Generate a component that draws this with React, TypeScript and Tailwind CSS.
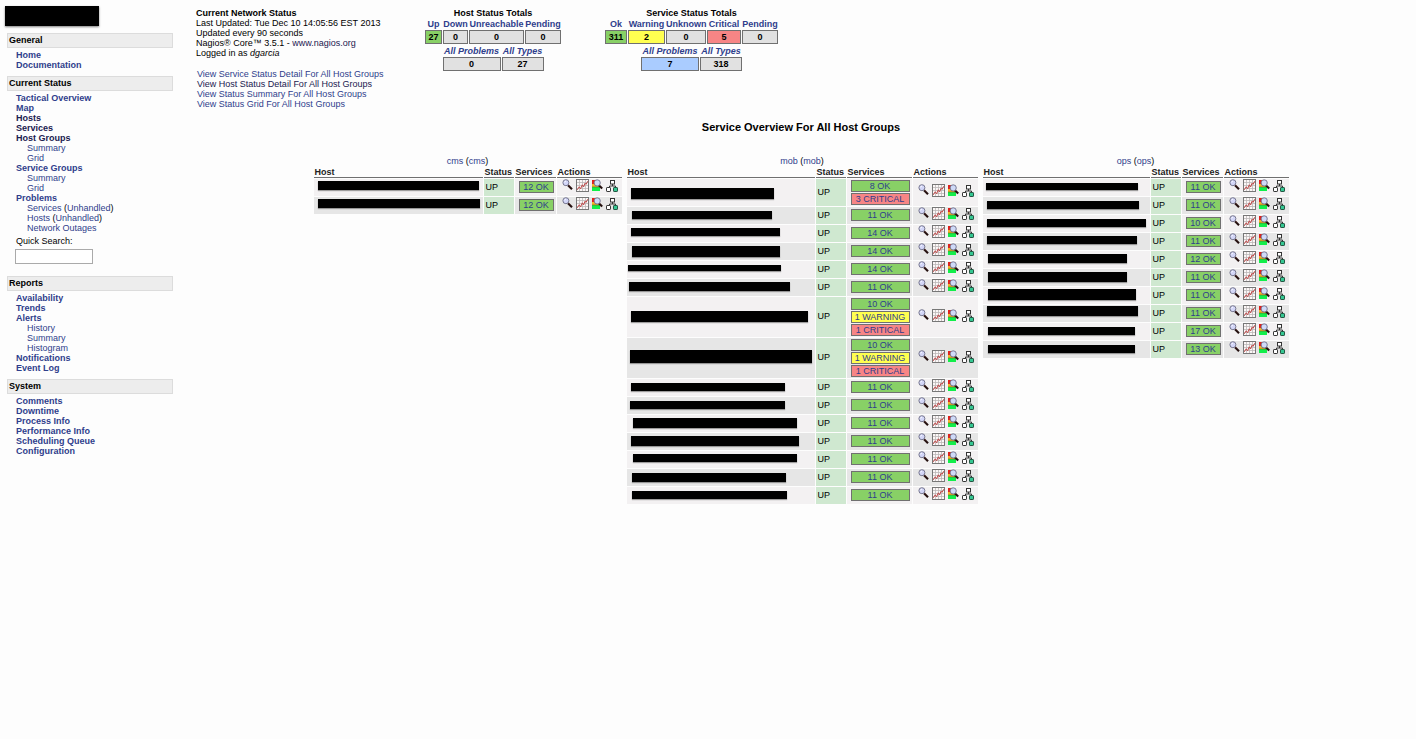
import React from "react";

type Tone = "ok" | "warning" | "critical";
type Bar = [left: number, top: number, width: number, height: number];
type HostRow = { bar: Bar; services: [string, Tone][] };
type Group = { name: string; cols: [number, number, number, number]; rows: HostRow[] };
type NavItem = { label: string; sub?: boolean; visited?: boolean; paren?: boolean };

const toneClass: Record<Tone, string> = {
  ok: "bg-[#88d066]",
  warning: "bg-[#ffff50]",
  critical: "bg-[#f78585]",
};

const ok = (n: number): [string, Tone] => [`${n} OK`, "ok"];
const warn = (n: number): [string, Tone] => [`${n} WARNING`, "warning"];
const crit = (n: number): [string, Tone] => [`${n} CRITICAL`, "critical"];

const groups: Group[] = [
  {
    name: "cms",
    cols: [169, 30, 41, 65],
    rows: [
      { bar: [4, 2, 161, 9], services: [ok(12)] },
      { bar: [4, 2, 162, 9], services: [ok(12)] },
    ],
  },
  {
    name: "mob",
    cols: [188, 30, 65, 65],
    rows: [
      { bar: [4, 9, 143, 11], services: [ok(8), crit(3)] },
      { bar: [5, 4, 140, 8], services: [ok(11)] },
      { bar: [4, 3, 149, 8], services: [ok(14)] },
      { bar: [5, 3, 148, 11], services: [ok(14)] },
      { bar: [1, 4, 153, 6], services: [ok(14)] },
      { bar: [2, 3, 161, 9], services: [ok(11)] },
      { bar: [4, 14, 177, 11], services: [ok(10), warn(1), crit(1)] },
      { bar: [3, 12, 182, 13], services: [ok(10), warn(1), crit(1)] },
      { bar: [4, 4, 154, 8], services: [ok(11)] },
      { bar: [3, 4, 155, 8], services: [ok(11)] },
      { bar: [6, 3, 164, 10], services: [ok(11)] },
      { bar: [4, 3, 168, 10], services: [ok(11)] },
      { bar: [6, 3, 164, 8], services: [ok(11)] },
      { bar: [5, 4, 154, 9], services: [ok(11)] },
      { bar: [5, 4, 155, 8], services: [ok(11)] },
    ],
  },
  {
    name: "ops",
    cols: [167, 30, 41, 65],
    rows: [
      { bar: [3, 4, 152, 7], services: [ok(11)] },
      { bar: [4, 4, 152, 8], services: [ok(11)] },
      { bar: [4, 4, 159, 8], services: [ok(10)] },
      { bar: [4, 3, 150, 8], services: [ok(11)] },
      { bar: [5, 3, 139, 9], services: [ok(12)] },
      { bar: [5, 3, 139, 10], services: [ok(11)] },
      { bar: [5, 2, 148, 11], services: [ok(11)] },
      { bar: [4, 1, 151, 10], services: [ok(11)] },
      { bar: [5, 4, 147, 8], services: [ok(17)] },
      { bar: [5, 4, 147, 8], services: [ok(13)] },
    ],
  },
];

const general: NavItem[] = [{ label: "Home" }, { label: "Documentation" }];
const current: NavItem[] = [
  { label: "Tactical Overview" },
  { label: "Map" },
  { label: "Hosts", visited: true },
  { label: "Services", visited: true },
  { label: "Host Groups", visited: true },
  { label: "Summary", sub: true },
  { label: "Grid", sub: true },
  { label: "Service Groups" },
  { label: "Summary", sub: true },
  { label: "Grid", sub: true },
  { label: "Problems" },
  { label: "Services", sub: true, paren: true },
  { label: "Hosts", sub: true, paren: true },
  { label: "Network Outages", sub: true },
];
const reports: NavItem[] = [
  { label: "Availability" },
  { label: "Trends" },
  { label: "Alerts" },
  { label: "History", sub: true },
  { label: "Summary", sub: true },
  { label: "Histogram", sub: true },
  { label: "Notifications" },
  { label: "Event Log" },
];
const system: NavItem[] = [
  { label: "Comments" },
  { label: "Downtime" },
  { label: "Process Info" },
  { label: "Performance Info" },
  { label: "Scheduling Queue" },
  { label: "Configuration" },
];

function NavSection({ title, items, children }: { title: string; items: NavItem[]; children?: React.ReactNode }) {
  return (
    <section>
      <h2 className="h-[15px] border border-[#dcdcdc] bg-[#ededed] px-px leading-[13px] font-bold">{title}</h2>
      <ul className="pt-0.5 pl-[9px]">
        {items.map((it, i) => (
          <li key={i} className={it.sub ? "pl-[11px]" : "font-bold"}>
            <a href="#" className={it.visited ? "text-[#1a2050]" : "text-[#2f3e8c]"}>
              {it.label}
            </a>
            {it.paren && (
              <>
                {" "}
                (
                <a href="#" className="text-[#2f3e8c]">
                  Unhandled
                </a>
                )
              </>
            )}
          </li>
        ))}
      </ul>
      {children}
    </section>
  );
}

type Total = { label: string; value: string; width: number; bg: string };

function TotalsTable({ cells, italic }: { cells: Total[]; italic?: boolean }) {
  return (
    <table className="table-fixed border-separate border-spacing-px" style={{ width: cells.reduce((s, c) => s + c.width + 1, 1) }}>
      <thead>
        <tr>
          {cells.map((c) => (
            <th
              key={c.label}
              style={{ width: c.width }}
              className={
                italic
                  ? "h-[10px] p-0 font-bold whitespace-nowrap italic"
                  : "h-[10px] p-0 font-bold whitespace-nowrap"
              }
            >
              <a href="#" className="text-[#2f3e8c]">
                {c.label}
              </a>
            </th>
          ))}
        </tr>
      </thead>
      <tbody>
        <tr>
          {cells.map((c) => (
            <td key={c.label} className={`h-[14px] border border-[#707070] p-0 text-center font-bold ${c.bg}`}>
              {c.value}
            </td>
          ))}
        </tr>
      </tbody>
    </table>
  );
}

function Totals({ title, top, bottom }: { title: string; top: Total[]; bottom: Total[] }) {
  return (
    <section className="flex flex-col items-center">
      <h2 className="font-bold">{title}</h2>
      <TotalsTable cells={top} />
      <TotalsTable cells={bottom} italic />
    </section>
  );
}

const GRAY = "bg-[#e1e1e1]";
const hostTop: Total[] = [
  { label: "Up", value: "27", width: 17, bg: "bg-[#88d066]" },
  { label: "Down", value: "0", width: 25, bg: GRAY },
  { label: "Unreachable", value: "0", width: 55, bg: GRAY },
  { label: "Pending", value: "0", width: 36, bg: GRAY },
];
const hostBottom: Total[] = [
  { label: "All Problems", value: "0", width: 58, bg: GRAY },
  { label: "All Types", value: "27", width: 42, bg: GRAY },
];
const serviceTop: Total[] = [
  { label: "Ok", value: "311", width: 22, bg: "bg-[#88d066]" },
  { label: "Warning", value: "2", width: 37, bg: "bg-[#ffff50]" },
  { label: "Unknown", value: "0", width: 40, bg: GRAY },
  { label: "Critical", value: "5", width: 34, bg: "bg-[#f78585]" },
  { label: "Pending", value: "0", width: 36, bg: GRAY },
];
const serviceBottom: Total[] = [
  { label: "All Problems", value: "7", width: 58, bg: "bg-[#aaccff]" },
  { label: "All Types", value: "318", width: 42, bg: GRAY },
];

function DetailIcon() {
  return (
    <svg viewBox="0 0 14 14" className="size-3.5">
      <path d="M7 6.2 11 10.2" stroke="#24100f" strokeWidth="2.1" />
      <path d="M7.6 5.9 9 7.3" stroke="#7a4a48" strokeWidth="0.8" />
      <circle cx="4.9" cy="3.7" r="3" fill="#d3d6f8" stroke="#77778f" strokeWidth="1" />
      <path d="M3.6 3.4q.2-1.2 1.4-1.3" stroke="#fff" strokeWidth="0.9" fill="none" />
    </svg>
  );
}

function TrendIcon() {
  return (
    <svg viewBox="0 0 14 14" className="size-3.5">
      <rect x="0.5" y="0.5" width="12" height="12" fill="#fbf7f7" stroke="#777" />
      <path d="M3.5 1v11M6.5 1v11M9.5 1v11M1 3.5h11M1 6.5h11M1 9.5h11" stroke="#bdb8b8" strokeWidth="0.8" />
      <path d="M1.3 10.8 3.2 7.8 4.6 9.8 6.3 5.8 7.6 8 9 4.2 10.1 5.3 11.8 2.2" stroke="#c04a4a" strokeWidth="1" fill="none" />
    </svg>
  );
}

function StatusIcon() {
  return (
    <svg viewBox="0 0 14 14" className="size-3.5">
      <rect x="1" y="1" width="3" height="4" fill="#e0201c" />
      <rect x="1" y="5" width="7" height="3" fill="#f0b429" />
      <rect x="1" y="8" width="8" height="4" fill="#12ee4a" />
      <path d="M1 8h7" stroke="#6b5a20" strokeWidth="0.6" />
      <path d="M7.8 6.2 11.2 9.6" stroke="#24100f" strokeWidth="2.1" />
      <circle cx="6.2" cy="3.9" r="3.1" fill="#cfdaf8" stroke="#6e6e88" strokeWidth="0.9" />
    </svg>
  );
}

function MapIcon() {
  return (
    <svg viewBox="0 0 14 14" className="size-3.5">
      <path d="M6.5 5v2M3.5 8.5V7h6v1.5" stroke="#333" strokeWidth="1" fill="none" />
      <rect x="4.5" y="1.5" width="4" height="3.5" fill="#fff" stroke="#333" />
      <rect x="0.5" y="8.5" width="4" height="4" rx="0.6" fill="#fff" stroke="#333" />
      <rect x="7.5" y="8.5" width="4" height="4" rx="0.6" fill="#35c792" stroke="#23523f" />
    </svg>
  );
}

const actions = [
  { label: "View service details", Icon: DetailIcon },
  { label: "View trends", Icon: TrendIcon },
  { label: "View status", Icon: StatusIcon },
  { label: "Locate host on map", Icon: MapIcon },
];

function GroupTable({ group }: { group: Group }) {
  const head = "h-[11px] border-b border-[#707070] p-0 pl-px text-left font-bold text-[#222]";
  return (
    <table
      className="table-fixed border-separate border-spacing-px"
      style={{ width: group.cols.reduce((s, c) => s + c + 1, 1) }}
    >
      <caption className="h-[10px] text-center">
        <a href="#" className="text-[#2f3e8c]">
          {group.name}
        </a>{" "}
        (
        <a href="#" className="text-[#2f3e8c]">
          {group.name}
        </a>
        )
      </caption>
      <thead>
        <tr>
          {["Host", "Status", "Services", "Actions"].map((h, i) => (
            <th key={h} className={head} style={{ width: group.cols[i] }}>
              {h}
            </th>
          ))}
        </tr>
      </thead>
      <tbody>
        {group.rows.map((row, i) => {
          const bg = i % 2 ? "bg-[#e6e6e6]" : "bg-[#f3f1f2]";
          const [left, top, width, height] = row.bar;
          return (
            <tr key={i}>
              <td className={`p-0 align-top ${bg}`}>
                <div
                  className="bg-black shadow-[0_1px_1px_rgba(0,0,0,0.35)]"
                  style={{ marginLeft: left, marginTop: top, width, height }}
                />
              </td>
              <td className="bg-[#cfe8d0] p-0 pb-0.5 pl-0.5 align-middle">UP</td>
              <td
                className={`p-0 pr-0.5 pl-1 align-top ${row.services.length > 1 ? "py-px" : "pt-0.5"} ${bg}`}
              >
                <div className="flex flex-col gap-px">
                  {row.services.map(([text, tone]) => (
                    <a
                      key={text}
                      href="#"
                      className={`block h-3 border border-[#707070] text-center whitespace-nowrap text-[#2f3e8c] ${toneClass[tone]}`}
                    >
                      {text}
                    </a>
                  ))}
                </div>
              </td>
              <td className={`p-0 align-middle ${bg}`}>
                <div className="flex h-[17px] gap-px pl-1">
                  {actions.map(({ label, Icon }) => (
                    <a key={label} href="#" aria-label={label} className="block">
                      <Icon />
                    </a>
                  ))}
                </div>
              </td>
            </tr>
          );
        })}
      </tbody>
    </table>
  );
}

export default function App() {
  return (
    <div className="flex min-h-screen items-start bg-[#fdfdfd] font-['Liberation_Sans',Arial,sans-serif] text-[9px] leading-[10px] text-black">
      <nav className="w-[188px] shrink-0 pt-1.5 pr-[15px] pl-[7px]">
        <div className="-ml-0.5 h-5 w-[94px] bg-black shadow-[0_1px_2px_rgba(0,0,0,0.5)]" />
        <div className="flex flex-col gap-1.5 pt-[7px]">
          <NavSection title="General" items={general} />
          <NavSection title="Current Status" items={current}>
            <form className="flex flex-col items-start gap-[3px] pt-[3px] pb-1.5 pl-2">
              <label htmlFor="quick-search" className="pl-px">
                Quick Search:
              </label>
              <input id="quick-search" type="text" className="h-[15px] w-[78px] border border-[#aaa] bg-white px-1" />
            </form>
          </NavSection>
          <NavSection title="Reports" items={reports} />
          <NavSection title="System" items={system} />
        </div>
      </nav>
      <main className="min-w-0 grow pt-2 pr-0.5">
        <header className="flex items-start pl-2">
          <div className="w-[228px] shrink-0">
            <h2 className="font-bold">Current Network Status</h2>
            <p>Last Updated: Tue Dec 10 14:05:56 EST 2013</p>
            <p>Updated every 90 seconds</p>
            <p>
              Nagios® Core™ 3.5.1 -{" "}
              <a href="#" className="text-[#1a2050]">
                www.nagios.org
              </a>
            </p>
            <p>
              Logged in as <i>dgarcia</i>
            </p>
            <ul className="pt-[11px] pl-px text-[#2f3e8c]">
              <li>
                <a href="#">View Service Status Detail For All Host Groups</a>
              </li>
              <li>
                <a href="#" className="text-[#1a2050]">
                  View Host Status Detail For All Host Groups
                </a>
              </li>
              <li>
                <a href="#">View Status Summary For All Host Groups</a>
              </li>
              <li>
                <a href="#">View Status Grid For All Host Groups</a>
              </li>
            </ul>
          </div>
          <div className="flex gap-[42px]">
            <Totals title="Host Status Totals" top={hostTop} bottom={hostBottom} />
            <Totals title="Service Status Totals" top={serviceTop} bottom={serviceBottom} />
          </div>
        </header>
        <h1 className="pt-3 text-center text-[11px] leading-3 font-bold">Service Overview For All Host Groups</h1>
        <div className="flex items-start justify-center gap-[3px] pt-[23px]">
          {groups.map((g) => (
            <GroupTable key={g.name} group={g} />
          ))}
        </div>
      </main>
    </div>
  );
}
